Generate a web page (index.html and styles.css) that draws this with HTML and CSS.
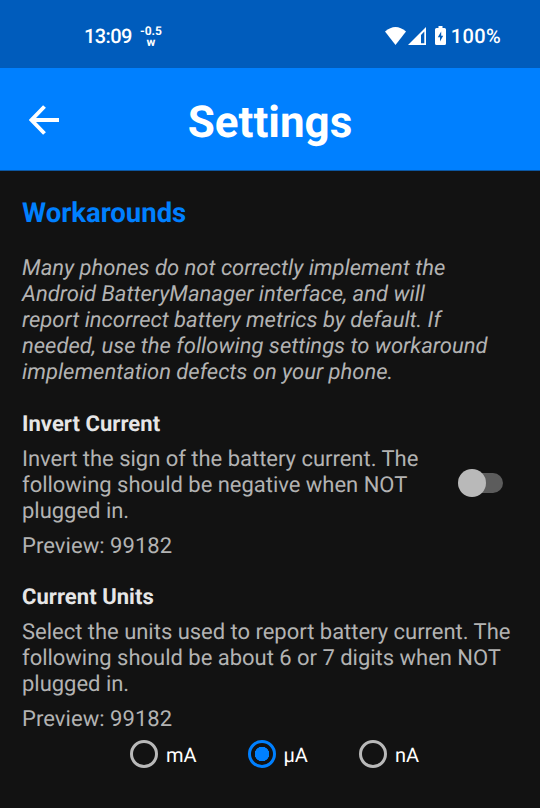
FILE: index.html
```html
<!DOCTYPE html>
<html lang="en">
<head>
<meta charset="utf-8">
<title>Settings</title>
<link rel="stylesheet" href="styles.css">
</head>
<body>
<div class="status">
  <span class="time">13:09</span>
  <span class="watts"><span>-0.5</span><span class="unit">w</span></span>
  <svg class="wifi" width="21" height="18" viewBox="0 0 21 18"><path d="M0 4.500Q10.500-4.500 21 4.500L10.500 18Z" fill="#fff"/></svg>
  <svg class="signal" width="18" height="18" viewBox="0 0 18 18"><path d="M18 0V18H0Z" fill="#fff"/><path d="M16.300 4.500V16.300H13V8Z" fill="#005cbc"/></svg>
  <svg class="battery" width="11" height="19" viewBox="0 0 11 19"><path d="M3.500 0H7.500V2H9.500Q11 2 11 3.500V17.500Q11 19 9.500 19H1.500Q0 19 0 17.500V3.500Q0 2 1.500 2H3.500Z" fill="#fff"/><path d="M6.200 5.500L2.800 11.300H5V15.500L8.200 9.700H6.200Z" fill="#005cbc"/></svg>
  <span class="percent">100%</span>
</div>
<header class="bar">
  <svg class="back" width="30" height="30" viewBox="0 0 30 30"><path d="M30 15H3M15.500 1.500L2.500 15L15.500 28.500" fill="none" stroke="#fff" stroke-width="3.900"/></svg>
  <h1>Settings</h1>
</header>
<main>
  <h2>Workarounds</h2>
  <p class="intro">Many phones do not correctly implement the<br>Android BatteryManager interface, and will<br>report incorrect battery metrics by default. If<br>needed, use the following settings to workaround<br>implementation defects on your phone.</p>
  <section class="invert">
    <h3>Invert Current</h3>
    <div class="row">
      <p>Invert the sign of the battery current. The<br>following should be negative when NOT<br>plugged in.</p>
      <span class="switch"></span>
    </div>
    <p class="preview">Preview: 99182</p>
  </section>
  <section class="units">
    <h3>Current Units</h3>
    <p>Select the units used to report battery current. The<br>following should be about 6 or 7 digits when NOT<br>plugged in.</p>
    <p class="preview">Preview: 99182</p>
    <div class="radios">
      <label><i></i><span>mA</span></label>
      <label><i class="on"></i><span>µA</span></label>
      <label><i></i><span>nA</span></label>
    </div>
  </section>
</main>
</body>
</html>
```
FILE: styles.css
```css
* { box-sizing: border-box; }
body { margin: 0; height: 808px; overflow: hidden; background: #121212; color: #b3b3b3; font-family: Roboto, sans-serif; text-rendering: geometricPrecision; }
h1, h2, h3, p { margin: 0; }
svg { flex: none; display: block; }
.status { height: 68px; background: #005cbc; color: #fff; display: flex; align-items: center; padding: 3px 39px 0 84px; font-size: 20px; font-weight: 500; }
.time { width: 47px; letter-spacing: -0.6px; }
.watts { display: flex; flex-direction: column; align-items: center; margin-left: 9px; font-size: 12px; line-height: 12px; font-weight: 700; }
.unit { line-height: 10px; }
.wifi { margin-left: auto; }
.signal { margin-left: 2px; }
.battery { margin: 0 5px 0 9px; }
.percent { letter-spacing: 0.35px; }
.bar { height: 103px; background: #0080ff; border-bottom: 1px solid #0c57a2; color: #fff; display: flex; align-items: center; padding: 1px 29px 0; }
.bar h1 { flex: 1; margin-right: 30px; text-align: center; font-size: 44px; line-height: 52px; padding-top: 5px; }
main { padding: 26px 22px 0; font-size: 22px; line-height: 26px; white-space: nowrap; }
h2 { color: #0080ff; font-size: 27.5px; line-height: 32px; }
.intro { margin-top: 27px; font-style: italic; }
h3 { margin-bottom: 9px; color: #e6e6e6; font-size: 22px; line-height: 26px; letter-spacing: 0.05px; }
section { margin-top: 26px; letter-spacing: -0.02px; }
.row { display: flex; justify-content: space-between; }
.preview { margin-top: 9px; letter-spacing: 0.05px; }
.units { margin-top: 25px; }
.switch { position: relative; flex: none; width: 41px; height: 20px; margin: 25.5px 15px 0 0; border-radius: 10px; background: #5c5c5c; }
.switch::before { content: ""; position: absolute; left: -4px; top: -4px; width: 28px; height: 28px; border-radius: 50%; background: #b9b9b9; }
.radios { display: flex; gap: 51px; margin: 6px 0 0 108px; color: #fff; font-size: 20px; line-height: 30px; }
.radios label { display: flex; align-items: center; gap: 8px; }
.radios span { padding-top: 1px; margin-bottom: -1px; }
.radios i { width: 28px; height: 28px; border: 3px solid #b9b9b9; border-radius: 50%; }
.radios .on { border-color: #0080ff; background: radial-gradient(circle, #0080ff 0 7px, transparent 7.500px); }
```
